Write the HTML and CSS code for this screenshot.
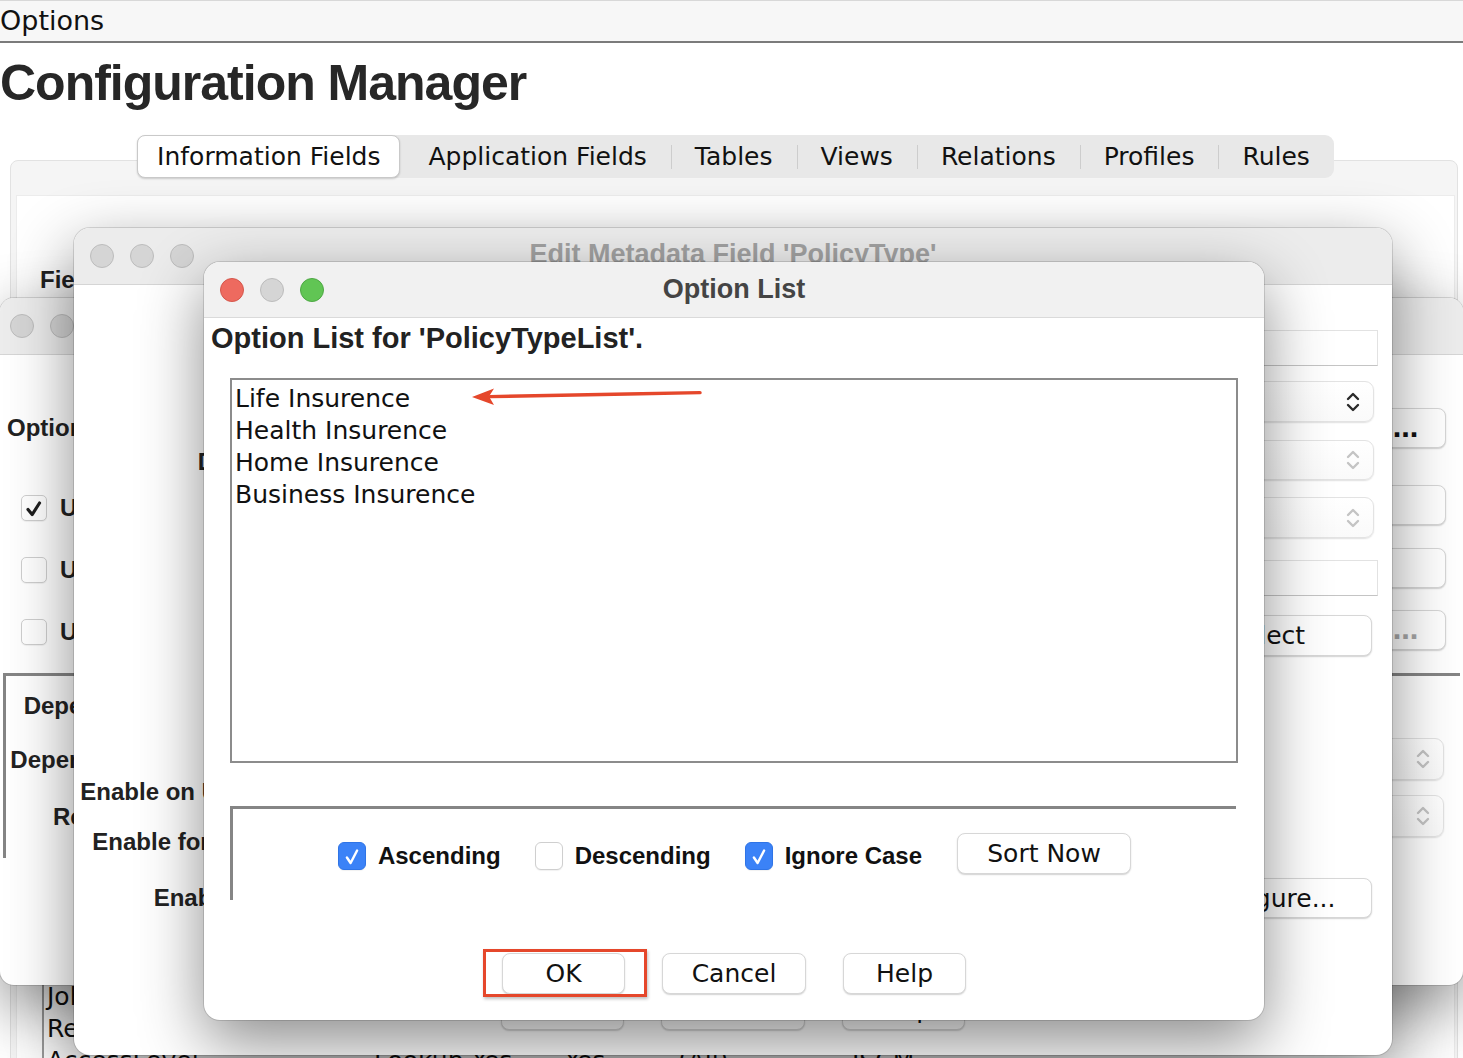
FILE: index.html
```html
<!DOCTYPE html>
<html lang="en">
<head>
<meta charset="utf-8">
<title>Configuration Manager</title>
<link rel="stylesheet" href="styles.css">
</head>
<body>
<div class="app">
  <div class="menubar">Options</div>
  <h1 class="app-title">Configuration Manager</h1>
  <div class="tabs-row">
    <div class="tabs">
      <div class="tab tab-active">Information Fields</div>
      <div class="tab tab-first">Application Fields</div>
      <div class="tab">Tables</div>
      <div class="tab">Views</div>
      <div class="tab">Relations</div>
      <div class="tab">Profiles</div>
      <div class="tab">Rules</div>
    </div>
  </div>
  <div class="panel">
    <div class="panel-inner">
      <div class="fields-label">Fields</div>
      <div class="field-table">
        <div class="ft-row"><span>JobTitle</span><span>Text</span><span>No</span><span>No</span><span>(All)</span><span>ISCM</span></div>
        <div class="ft-row"><span>Region</span><span>Text</span><span>No</span><span>No</span><span>(All)</span><span>ISCM</span></div>
        <div class="ft-row"><span>AccessLevel</span><span>Lookup</span><span>Yes</span><span>Yes</span><span>(All)</span><span>ISCM</span></div>
      </div>
    </div>
  </div>
</div>

<!-- Window 1: back options window -->
<div class="win win-options">
  <div class="titlebar titlebar-w1">
    <div class="lights">
      <span class="light"></span><span class="light"></span><span class="light"></span>
    </div>
    <div class="wtitle wtitle-dim">Options</div>
    <div></div>
  </div>
  <div class="w1-body">
    <div class="w1-top">
      <div class="w1-left">
        <div class="lbl">Options:</div>
        <div class="cb-row cb-row-first">
          <span class="cb"><svg viewBox="0 0 26 26" width="26" height="26"><path d="M6.5 13.5 L11 19 L19 6.5" fill="none" stroke="#1e1e1e" stroke-width="3.4" stroke-linecap="round" stroke-linejoin="round"/></svg></span>
          <span class="lbl">Use Option List</span>
        </div>
        <div class="cb-row">
          <span class="cb"></span>
          <span class="lbl">Use Lookup</span>
        </div>
        <div class="cb-row">
          <span class="cb"></span>
          <span class="lbl">Use Validation</span>
        </div>
      </div>
      <div class="w1-right">
        <div class="btn btn-dots btn-dots-1">...</div>
        <div class="btn btn-dots btn-dots-2"></div>
        <div class="btn btn-dots btn-dots-3"></div>
        <div class="btn btn-dots btn-dots-4 btn-disabled">...</div>
      </div>
    </div>
    <div class="w1-group">
      <div class="w1-group-labels">
        <div class="lbl">Dependent List:</div>
        <div class="lbl lbl-dep2">Dependent Field:</div>
        <div class="lbl lbl-dep3">Relationship:</div>
      </div>
      <div class="w1-group-controls">
        <div class="combo combo-w1a"><span></span>
          <svg class="chev" viewBox="0 0 14 26" width="14" height="26"><path d="M2 10 L7 5 L12 10 M2 16 L7 21 L12 16" fill="none" stroke="#c4c4c4" stroke-width="2.4" stroke-linecap="round" stroke-linejoin="round"/></svg>
        </div>
        <div class="combo combo-w1b"><span></span>
          <svg class="chev" viewBox="0 0 14 26" width="14" height="26"><path d="M2 10 L7 5 L12 10 M2 16 L7 21 L12 16" fill="none" stroke="#c4c4c4" stroke-width="2.4" stroke-linecap="round" stroke-linejoin="round"/></svg>
        </div>
      </div>
    </div>
  </div>
</div>

<!-- Window 2: Edit Metadata Field -->
<div class="win win-edit">
  <div class="titlebar">
    <div class="lights">
      <span class="light"></span><span class="light"></span><span class="light"></span>
    </div>
    <div class="wtitle wtitle-dim">Edit Metadata Field 'PolicyType'</div>
    <div></div>
  </div>
  <div class="w2-body">
    <div class="w2-main">
      <div class="w2-labels">
        <div class="lbl lbl-display">Display:</div>
        <div class="lbl lbl-enable1">Enable on Update:</div>
        <div class="lbl lbl-enable2">Enable for Batch:</div>
        <div class="lbl lbl-enable3">Enable Log:</div>
      </div>
      <div class="w2-controls">
        <div class="tfield tfield-1"></div>
        <div class="combo combo-w2a"><span></span>
          <svg class="chev" viewBox="0 0 14 26" width="14" height="26"><path d="M2 10 L7 5 L12 10 M2 16 L7 21 L12 16" fill="none" stroke="#2a2a2a" stroke-width="2.4" stroke-linecap="round" stroke-linejoin="round"/></svg>
        </div>
        <div class="combo combo-w2b"><span></span>
          <svg class="chev" viewBox="0 0 14 26" width="14" height="26"><path d="M2 10 L7 5 L12 10 M2 16 L7 21 L12 16" fill="none" stroke="#c4c4c4" stroke-width="2.4" stroke-linecap="round" stroke-linejoin="round"/></svg>
        </div>
        <div class="combo combo-w2c"><span></span>
          <svg class="chev" viewBox="0 0 14 26" width="14" height="26"><path d="M2 10 L7 5 L12 10 M2 16 L7 21 L12 16" fill="none" stroke="#c4c4c4" stroke-width="2.4" stroke-linecap="round" stroke-linejoin="round"/></svg>
        </div>
        <div class="tfield tfield-2"></div>
        <div class="btn btn-select">Select</div>
        <div class="btn btn-configure">Configure...</div>
      </div>
    </div>
    <div class="w2-footer">
      <div class="btn btn-ok-size">OK</div>
      <div class="btn btn-cancel-size">Cancel</div>
      <div class="btn btn-help-size">Help</div>
    </div>
  </div>
</div>

<!-- Window 3: Option List -->
<div class="win win-list">
  <div class="titlebar titlebar-w3">
    <div class="lights">
      <span class="light light-red"></span><span class="light"></span><span class="light light-green"></span>
    </div>
    <div class="wtitle">Option List</div>
    <div></div>
  </div>
  <div class="w3-body">
    <div class="w3-heading">Option List for 'PolicyTypeList'.</div>
    <div class="listbox">
      <div class="list-item">Life Insurence</div>
      <div class="list-item">Health Insurence</div>
      <div class="list-item">Home Insurence</div>
      <div class="list-item">Business Insurence</div>
      <svg class="annot-arrow" viewBox="0 0 240 24" width="240" height="24">
        <path d="M20 12.6 C80 11.5 160 10 230 8.6" fill="none" stroke="#e5472b" stroke-width="3.4" stroke-linecap="round"/>
        <path d="M2 13 L24 4.5 L19 12.6 L24 21 Z" fill="#e5472b"/>
      </svg>
    </div>
    <div class="sort-group">
      <div class="sort-row">
        <div class="check-item">
          <span class="cb cb-blue"><svg viewBox="0 0 28 28" width="28" height="28"><path d="M8.5 14.5 L12.5 20.5 L19.5 7" fill="none" stroke="#fff" stroke-width="2.6" stroke-linecap="round" stroke-linejoin="round"/></svg></span>
          <span class="lbl">Ascending</span>
        </div>
        <div class="check-item">
          <span class="cb cb-big"></span>
          <span class="lbl">Descending</span>
        </div>
        <div class="check-item">
          <span class="cb cb-blue"><svg viewBox="0 0 28 28" width="28" height="28"><path d="M8.5 14.5 L12.5 20.5 L19.5 7" fill="none" stroke="#fff" stroke-width="2.6" stroke-linecap="round" stroke-linejoin="round"/></svg></span>
          <span class="lbl">Ignore Case</span>
        </div>
        <div class="btn btn-sort">Sort Now</div>
      </div>
    </div>
    <div class="w3-footer">
      <div class="btn btn-ok-size btn-ok">OK</div>
      <div class="btn btn-cancel-size">Cancel</div>
      <div class="btn btn-help-size">Help</div>
    </div>
  </div>
</div>
</body>
</html>
```

FILE: styles.css
```css
* { box-sizing: border-box; }

html, body { margin: 0; padding: 0; }

body {
  width: 1463px;
  height: 1058px;
  overflow: hidden;
  position: relative;
  background: #ffffff;
  font-family: "DejaVu Sans", sans-serif;
  color: #111;
}

/* ---------- main application ---------- */
.menubar {
  height: 43px;
  border-top: 1px solid #d8d8d8;
  border-bottom: 2px solid #7b7b7b;
  background: #f7f7f7;
  font-size: 27px;
  line-height: 40px;
  color: #111;
}

.app-title {
  margin: 11px 0 0 0;
  font-family: "Liberation Sans", Arial, sans-serif;
  font-weight: bold;
  font-size: 50px;
  line-height: 58px;
  letter-spacing: -1px;
  color: #272727;
}

.tabs-row {
  display: flex;
  justify-content: center;
  margin-top: 23px;
  padding-left: 8px;
  position: relative;
  z-index: 1;
}

.tabs {
  display: flex;
  align-items: center;
  height: 43px;
  background: #e8e8e8;
  border-radius: 9px;
}

.tab {
  height: 43px;
  padding: 0 24px;
  font-size: 25px;
  line-height: 44px;
  color: #111;
  background: linear-gradient(#cdcdcd, #cdcdcd) left center / 1px 24px no-repeat;
}

.tab-active {
  padding: 0 19px;
  line-height: 42px;
  background: #fff;
  border: 1px solid #c9c9c9;
  border-radius: 8px;
  box-shadow: 0 1px 2px rgba(0, 0, 0, 0.18);
}

.tab-first {
  margin-left: 4px;
  background: none;
}

.panel {
  margin: -18px 5px 0 10px;
  height: 960px;
  background: #f5f5f5;
  border: 1px solid #e2e2e2;
  border-radius: 8px;
  padding: 34px 2px 0 5px;
}

.panel-inner {
  height: 100%;
  background: #fff;
  border: 1px solid #ececec;
  padding: 70px 0 0 23px;
}

.fields-label {
  font-family: "Liberation Sans", Arial, sans-serif;
  font-weight: bold;
  font-size: 24px;
  line-height: 28px;
  color: #222;
}

.field-table {
  margin: 687px 0 0 2px;
  border-left: 2px solid #9c9c9c;
}

.ft-row {
  display: grid;
  grid-template-columns: 327px 98px 93px 113px 174px 1fr;
  padding-left: 3px;
  height: 32px;
  font-size: 25px;
  line-height: 32px;
  color: #111;
  white-space: nowrap;
}

/* ---------- windows ---------- */
.win {
  position: absolute;
  background: #fff;
  border-radius: 16px;
  overflow: hidden;
  display: flex;
  flex-direction: column;
  box-shadow: 0 0 0 1px rgba(0, 0, 0, 0.13), 0 22px 64px rgba(0, 0, 0, 0.46);
}

.win-options {
  left: 0;
  top: 298px;
  width: 1463px;
  height: 687px;
  border-radius: 14px;
}

.win-edit {
  left: 74px;
  top: 228px;
  width: 1318px;
  height: 827px;
}

.win-list {
  left: 204px;
  top: 262px;
  width: 1060px;
  height: 758px;
}

.titlebar {
  flex: none;
  height: 57px;
  display: grid;
  grid-template-columns: 1fr auto 1fr;
  align-items: center;
  padding: 0 16px;
  background: #ececec;
  border-bottom: 1px solid #d5d5d5;
}

.titlebar-w1 { padding-left: 10px; }

.titlebar-w3 {
  height: 56px;
  background: #f1f1f1;
  border-bottom: 1px solid #dadada;
}

.lights {
  display: flex;
  gap: 16px;
}

.light {
  width: 24px;
  height: 24px;
  border-radius: 50%;
  background: #d5d5d5;
  border: 1px solid #bcbcbc;
}

.light-red {
  background: #ee6a5f;
  border-color: #d4574c;
}

.light-green {
  background: #61c554;
  border-color: #4ea844;
}

.wtitle {
  font-family: "Liberation Sans", Arial, sans-serif;
  font-weight: bold;
  font-size: 27px;
  color: #444;
  white-space: nowrap;
}

.wtitle-dim {
  color: #a2a2a2;
  margin-top: -4px;
}

.lbl {
  font-family: "Liberation Sans", Arial, sans-serif;
  font-weight: bold;
  font-size: 24px;
  line-height: 28px;
  color: #222;
  white-space: nowrap;
}

/* generic controls */
.btn {
  display: flex;
  align-items: center;
  justify-content: center;
  height: 41px;
  background: #fff;
  border: 1px solid #d7d7d7;
  border-radius: 8px;
  box-shadow: 0 1px 1.5px rgba(0, 0, 0, 0.18);
  font-size: 25px;
  color: #111;
  white-space: nowrap;
}

.btn-disabled { color: #a8a8a8; }

.cb {
  flex: none;
  width: 26px;
  height: 26px;
  border-radius: 5px;
  background: #fff;
  border: 1px solid #cfcfcf;
  box-shadow: 0 1px 1px rgba(0, 0, 0, 0.06);
  display: flex;
}

.cb-big {
  width: 28px;
  height: 28px;
  border-radius: 6px;
}

.cb-blue {
  width: 28px;
  height: 28px;
  border-radius: 6px;
  background: #3b82f7;
  border-color: #2f74e6;
}

.combo {
  display: flex;
  align-items: center;
  justify-content: space-between;
  width: 240px;
  height: 41px;
  padding-right: 13px;
  background: linear-gradient(#ffffff, #fafafa);
  border: 1px solid #e3e3e3;
  border-radius: 9px;
  box-shadow: 0 1px 1.5px rgba(0, 0, 0, 0.12);
}

.chev { flex: none; }

.tfield {
  width: 300px;
  height: 36px;
  background: #fff;
  border: 1px solid #e2e2e2;
  border-bottom-color: #c4c4c4;
}

/* ---------- window 1 ---------- */
.w1-body {
  flex: 1;
  display: flex;
  flex-direction: column;
}

.w1-top {
  height: 318px;
  display: flex;
  justify-content: space-between;
}

.w1-left {
  padding: 59px 0 0 7px;
}

.cb-row {
  display: flex;
  align-items: center;
  gap: 13px;
  height: 28px;
  margin: 34px 0 0 14px;
}

.cb-row-first { margin-top: 52px; }

.w1-right {
  padding: 53px 17px 0 0;
  display: flex;
  flex-direction: column;
  align-items: flex-end;
}

.btn-dots {
  width: 82px;
  height: 40px;
  font-weight: bold;
  letter-spacing: -1px;
}

.btn-dots-1 { margin-top: 0; }
.btn-dots-2 { margin-top: 37px; }
.btn-dots-3 { margin-top: 23px; }
.btn-dots-4 { margin-top: 22px; }

.w1-group {
  margin: 0 3px;
  height: 185px;
  border-top: 3px solid #858585;
  border-left: 3px solid #858585;
  display: flex;
  justify-content: space-between;
}

.w1-group-labels {
  width: 199px;
  padding-top: 16px;
  display: flex;
  flex-direction: column;
  align-items: flex-end;
}

.lbl-dep2 { margin-top: 26px; }
.lbl-dep3 { margin-top: 29px; }

.w1-group-controls {
  padding: 62px 16px 0 0;
  display: flex;
  flex-direction: column;
  align-items: flex-end;
}

.combo-w1a { height: 42px; }
.combo-w1b { height: 42px; margin-top: 15px; }

/* ---------- window 2 ---------- */
.w2-body {
  flex: 1;
  display: flex;
  flex-direction: column;
}

.w2-main {
  flex: 1;
  display: flex;
  justify-content: space-between;
}

.w2-labels {
  width: 217px;
  display: flex;
  flex-direction: column;
  align-items: flex-end;
}

.lbl-display { margin-top: 163px; }
.lbl-enable1 { margin-top: 302px; }
.lbl-enable2 { margin-top: 22px; }
.lbl-enable3 { margin-top: 28px; }

.w2-controls {
  padding-right: 14px;
  display: flex;
  flex-direction: column;
  align-items: flex-end;
}

.tfield-1 { margin-top: 45px; }

.combo-w2a { margin: 15px 4px 0 0; }
.combo-w2b { margin: 18px 4px 0 0; height: 40px; }
.combo-w2c { margin: 17px 4px 0 0; }

.tfield-2 { margin-top: 22px; }

.btn-select {
  width: 211px;
  margin: 19px 6px 0 0;
}

.btn-configure {
  width: 218px;
  height: 40px;
  margin: 222px 6px 0 0;
}

.w2-footer {
  display: flex;
  justify-content: center;
  gap: 37px;
  padding: 0 0 25px 0;
}

.btn-ok-size { width: 123px; }
.btn-cancel-size { width: 144px; }
.btn-help-size { width: 123px; }

/* ---------- window 3 ---------- */
.w3-body {
  flex: 1;
  display: flex;
  flex-direction: column;
  padding: 3px 26px 0 7px;
}

.w3-heading {
  font-family: "Liberation Sans", Arial, sans-serif;
  font-weight: bold;
  font-size: 29px;
  line-height: 34px;
  color: #222;
  white-space: nowrap;
}

.listbox {
  position: relative;
  margin: 23px 0 0 19px;
  height: 385px;
  border: 2px solid #8c8c8c;
  padding: 3px 0 0 3px;
  background: #fff;
}

.list-item {
  font-size: 25px;
  line-height: 32px;
  color: #111;
}

.annot-arrow {
  position: absolute;
  left: 238px;
  top: 4px;
}

.sort-group {
  margin: 43px 2px 0 19px;
  height: 94px;
  border-top: 3px solid #858585;
  border-left: 3px solid #858585;
  padding-top: 24px;
}

.sort-row {
  display: flex;
  align-items: center;
  justify-content: center;
  gap: 34px;
  height: 41px;
  padding-left: 0;
}

.check-item {
  display: flex;
  align-items: center;
  gap: 12px;
  margin-top: 4px;
}

.check-item .lbl { color: #111; }

.btn-sort {
  width: 174px;
  margin-left: 1px;
}

.w3-footer {
  margin: 53px 0 0 19px;
  display: flex;
  justify-content: center;
  gap: 37px;
}

.btn-ok {
  position: relative;
}

.btn-ok::after {
  content: "";
  position: absolute;
  left: -20px;
  right: -23px;
  top: -5px;
  bottom: -4px;
  border: 3px solid #e5472b;
  box-shadow: 1px 2px 3px rgba(0, 0, 0, 0.25);
}
```
